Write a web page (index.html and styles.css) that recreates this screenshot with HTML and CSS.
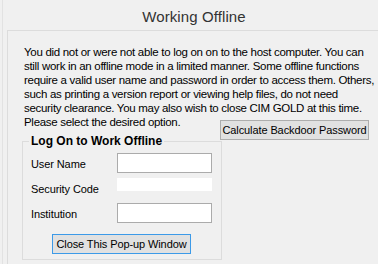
FILE: index.html
```html
<!DOCTYPE html>
<html>
<head>
<meta charset="utf-8">
<link rel="stylesheet" href="styles.css">
</head>
<body>
<div class="window">
  <div class="title">Working Offline</div>
  <div class="panel">
    <p class="message">You did not or were not able to log on on to the host computer. You can still work in an offline mode in a limited manner. Some offline functions require a valid user name and password in order to access them. Others, such as printing a version report or viewing help files, do not need security clearance. You may also wish to close CIM GOLD at this time. Please select the desired option.</p>
    <div class="actions">
      <button class="btn btn-backdoor">Calculate Backdoor Password</button>
    </div>
    <fieldset class="group">
      <legend class="group-title">Log On to Work Offline</legend>
      <div class="form">
        <label class="lbl">User Name</label>
        <span class="field"></span>
        <label class="lbl">Security Code</label>
        <span class="field field-plain"></span>
        <label class="lbl">Institution</label>
        <span class="field"></span>
      </div>
      <div class="close-row">
        <button class="btn btn-default">Close This Pop-up Window</button>
      </div>
    </fieldset>
  </div>
</div>
</body>
</html>
```

FILE: styles.css
```css
* { box-sizing: border-box; }
html, body { margin: 0; padding: 0; }
body {
  width: 378px;
  height: 264px;
  overflow: hidden;
  background: #f0f0f0;
  font-family: "Liberation Sans", Arial, sans-serif;
  font-size: 11px;
  letter-spacing: -0.1px;
  color: #000;
}
.window {
  height: 264px;
  margin-left: 2px;
  border-left: 1px solid #e2e2e2;
}
.title {
  height: 30px;
  display: flex;
  align-items: center;
  justify-content: center;
  font-size: 15px;
  letter-spacing: 0.1px;
  color: #333;
  padding: 2px 0 0 7px;
}
.panel {
  margin-left: 4px;
  height: 234px;
  border-top: 1px solid #dcdcdc;
  border-left: 1px solid #dcdcdc;
  padding: 14px 0 0 16px;
}
.message {
  margin: 0;
  width: 354px;
  font-size: 11.5px;
  letter-spacing: -0.3px;
  line-height: 14px;
}
.actions {
  display: flex;
  justify-content: flex-end;
  margin-top: -9px;
  padding-right: 9px;
}
.btn {
  font-family: "Liberation Sans", Arial, sans-serif;
  font-size: 11px;
  letter-spacing: -0.1px;
  color: #000;
  background: #e1e1e1;
  border: 1px solid #adadad;
  padding: 0;
  margin: 0;
  height: 20px;
  white-space: nowrap;
}
.btn-backdoor {
  width: 149px;
}
.group {
  margin: -6px 0 0 -2px;
  width: 200px;
  height: 126px;
  border: 1px solid #dcdcdc;
  padding: 0 0 0 8px;
}
.group-title {
  font-weight: bold;
  font-size: 12px;
  letter-spacing: 0;
  line-height: 14px;
  padding: 0 2px;
  margin-left: -2px;
  white-space: nowrap;
}
.form {
  display: grid;
  grid-template-columns: 86px 95px;
  grid-template-rows: repeat(3, 25px);
  margin-top: 5px;
}
.lbl {
  line-height: 22px;
  align-self: start;
}
.field {
  display: block;
  align-self: start;
  height: 20px;
  background: #fff;
  border: 1px solid #ababab;
}
.field-plain {
  height: 13px;
  border: none;
}
.close-row {
  display: flex;
  padding-left: 21px;
  margin-top: 6px;
}
.btn-default {
  width: 139px;
  border-color: #3c9ae8;
}
```
